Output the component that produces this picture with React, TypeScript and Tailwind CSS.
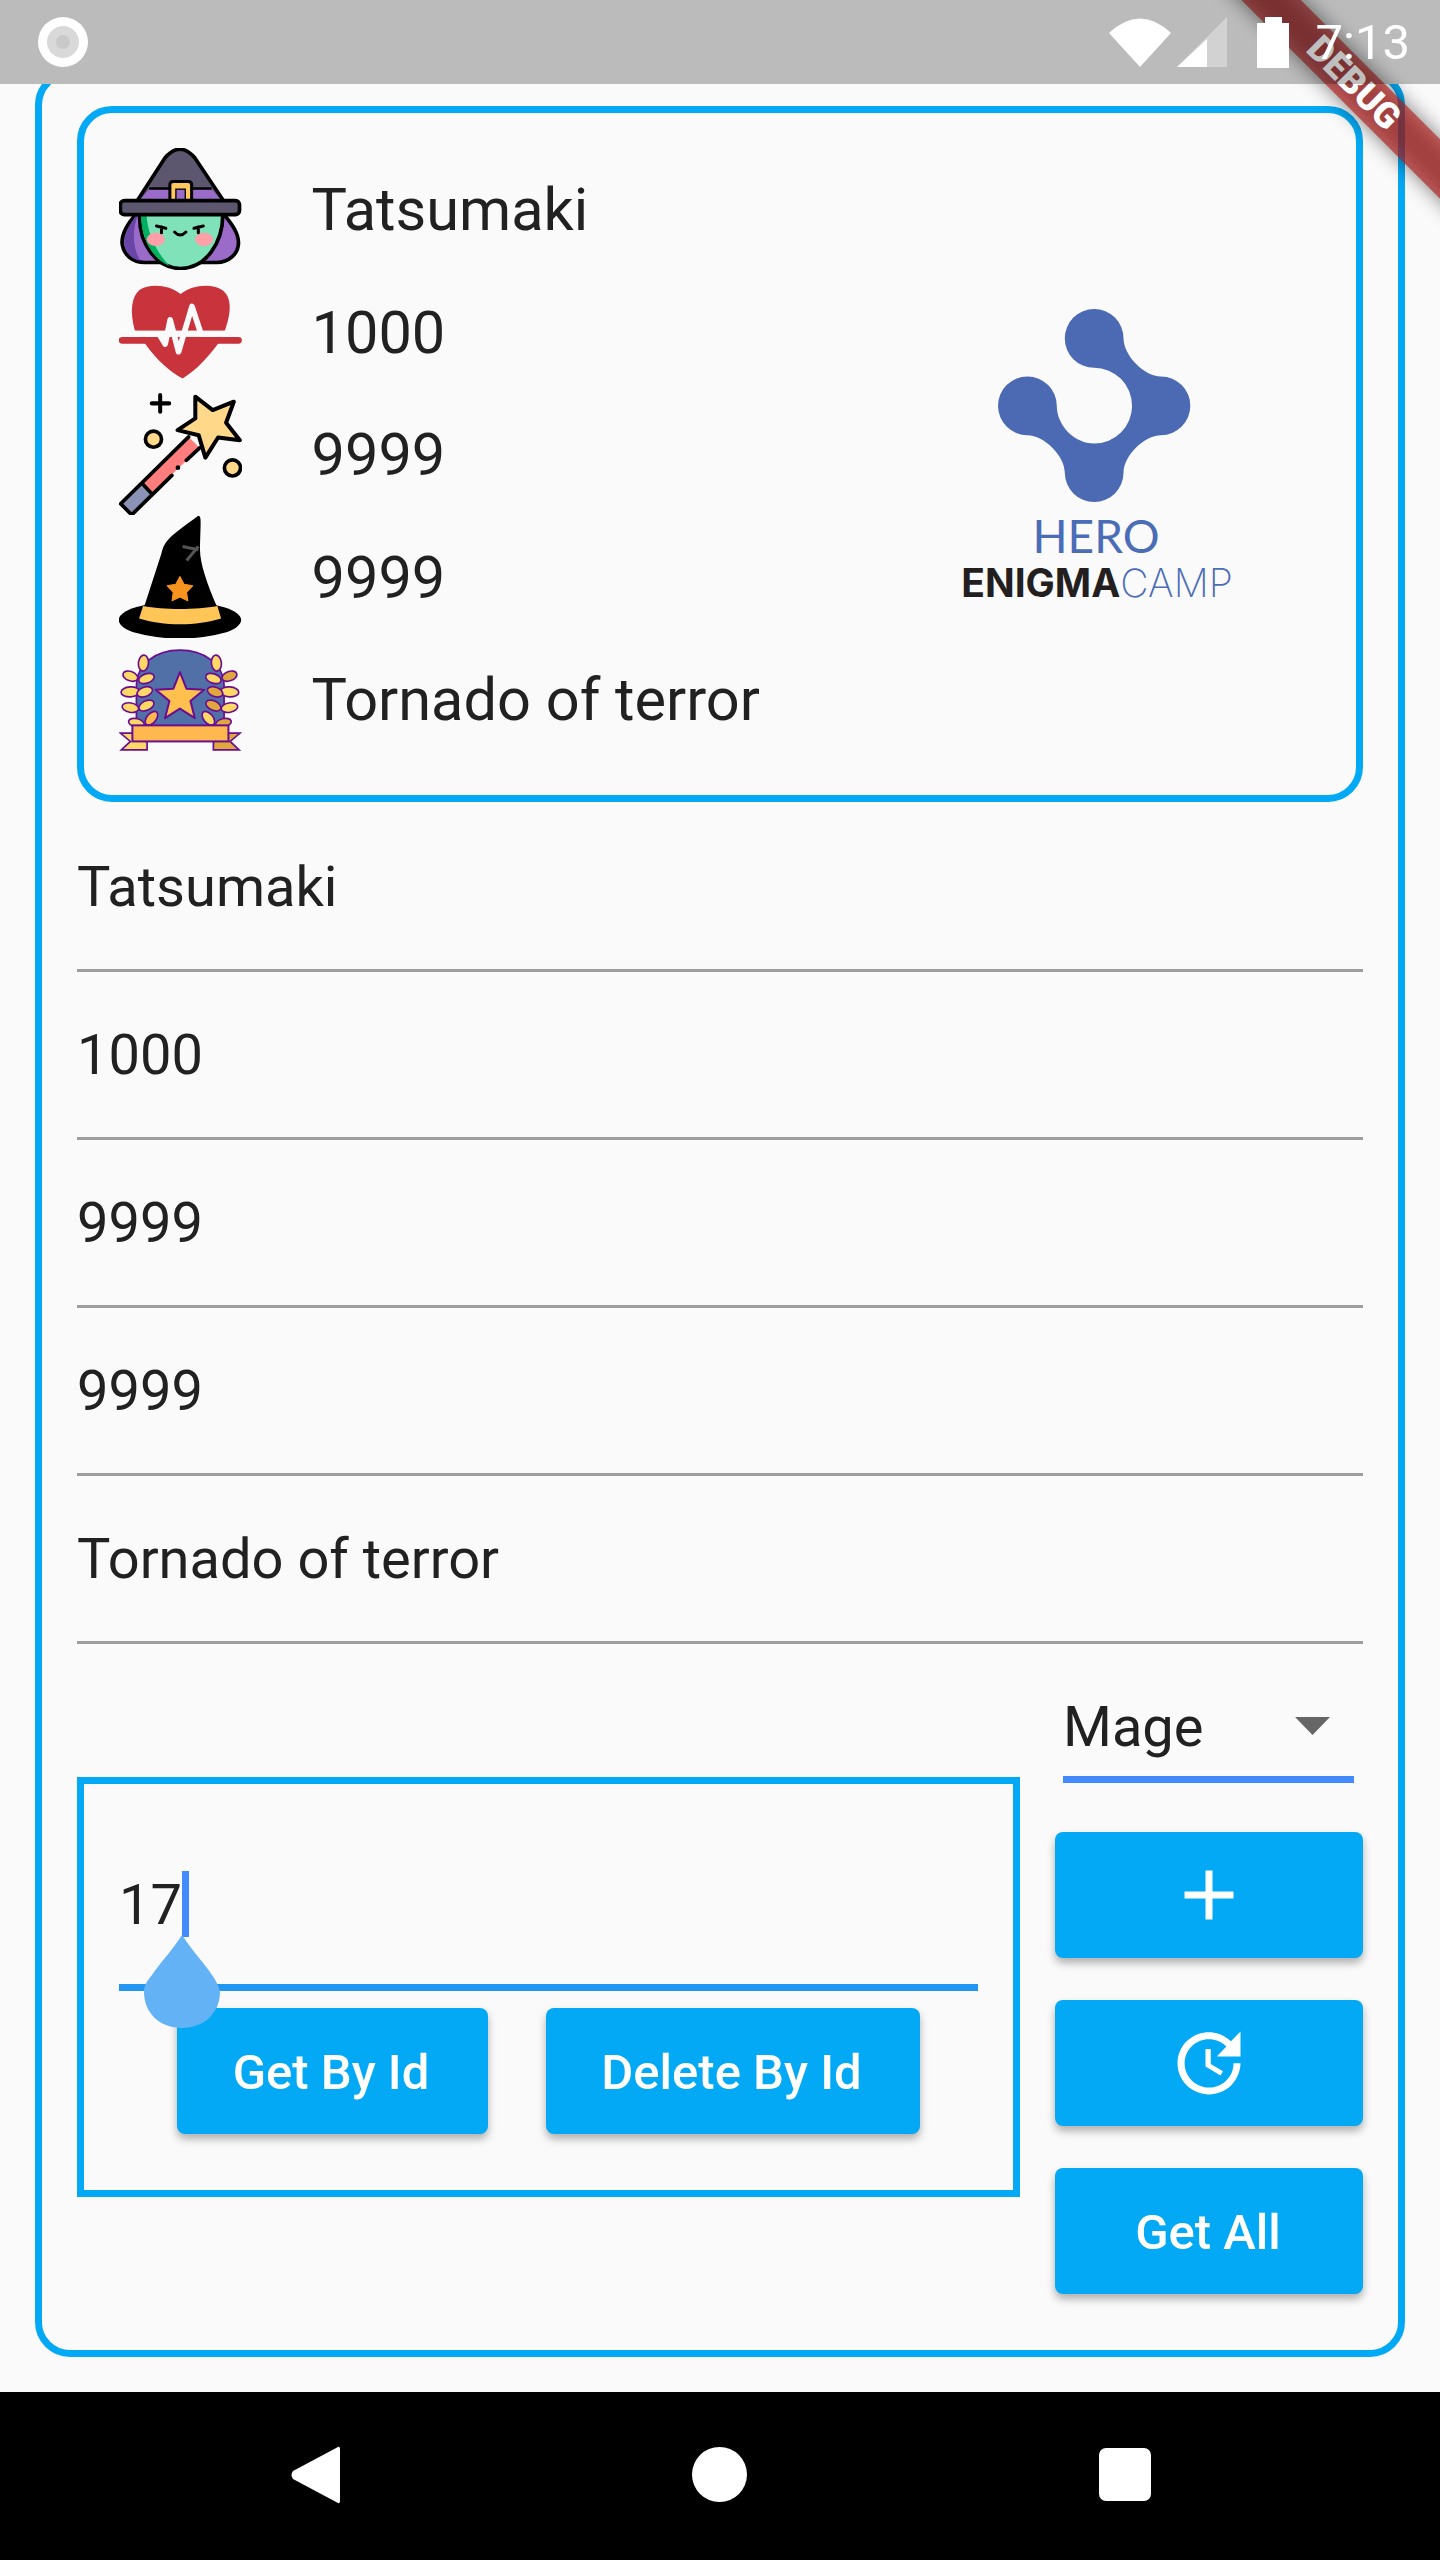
import React from 'react'

const starPoints = (cx: number, cy: number, r: number, inner: number) =>
  Array.from({ length: 10 }, (_, i) => {
    const a = (Math.PI / 5) * i - Math.PI / 2
    const d = i % 2 === 0 ? r : inner
    return `${cx + Math.cos(a) * d},${cy + Math.sin(a) * d}`
  }).join(' ')

const WitchIcon = () => (
  <svg viewBox="88 55 366 366" className="h-full w-full">
    <path d="M140 252C112 282 97 310 97 338C100 375 130 397 165 397L380 397C415 397 445 372 445 338C445 308 425 282 400 252Z" fill="#9b6bc9" stroke="#000" strokeWidth="11" />
    <path d="M140 256C118 285 104 312 104 338C106 365 125 388 152 392C130 360 125 300 145 256Z" fill="#6a45a8" />
    <path d="M150 250C145 340 200 415 272 415C345 415 400 340 398 250Z" fill="#80e2b8" stroke="#000" strokeWidth="11" />
    <path d="M154 254C152 320 187 388 240 408C207 375 174 320 170 254Z" fill="#00b060" />
    <path d="M143 212L225 85Q270 32 315 85L400 212Z" fill="#5c566e" stroke="#000" strokeWidth="11" />
    <path d="M150 210L178 178L365 178L393 210Z" fill="#9b6bc9" />
    <path d="M178 176L365 176" stroke="#000" strokeWidth="8" />
    <path d="M240 212L240 165Q240 155 250 155L295 155Q305 155 305 165L305 212Z" fill="#ffc75f" stroke="#000" strokeWidth="9" />
    <rect x="258" y="178" width="28" height="36" fill="#9b6bc9" stroke="#000" strokeWidth="4" />
    <rect x="92" y="212" width="356" height="42" rx="12" fill="#5c566e" stroke="#000" strokeWidth="11" />
    <ellipse cx="198" cy="328" rx="27" ry="20" fill="#ffa0a8" />
    <ellipse cx="342" cy="328" rx="27" ry="20" fill="#ffa0a8" />
    <path d="M200 288L228 295M215 290L215 308M340 288L312 295M325 290L325 308" stroke="#000" strokeWidth="9" strokeLinecap="round" />
    <path d="M254 306Q271 324 288 306" fill="none" stroke="#000" strokeWidth="9" strokeLinecap="round" />
  </svg>
)

const HeartIcon = () => (
  <svg viewBox="88 421 366 366" className="h-full w-full">
    <path d="M272 493C240 465 180 460 150 480C125 500 120 545 135 600L165 640C200 690 240 725 278 745C320 720 355 680 385 640L405 600C425 545 425 500 395 480C365 460 305 465 272 493Z" fill="#c9333b" />
    <rect x="88" y="602" width="366" height="19" fill="#fafafa" />
    <path d="M97 631L445 631" stroke="#c9333b" strokeWidth="20" strokeLinecap="round" />
    <path d="M165 612L208 612L226 642L241 570L266 665L306 530L333 612L385 612" fill="none" stroke="#fafafa" strokeWidth="17" strokeLinejoin="round" />
  </svg>
)

const WandIcon = () => (
  <svg viewBox="42 39 366 366" className="h-full w-full">
    <path d="M165 45L165 95M140 70L192 70" stroke="#000" strokeWidth="12" strokeLinecap="round" />
    <circle cx="145" cy="177" r="24" fill="#ffd88a" stroke="#000" strokeWidth="11" />
    <circle cx="381" cy="263" r="24" fill="#ffd88a" stroke="#000" strokeWidth="11" />
    <polygon points="112,310 250,170 283,203 140,340" fill="#ff7d7d" />
    <polygon points="47,370 112,310 140,340 80,403" fill="#8a93b5" />
    <path d="M47 370L250 170M80 403L47 370M112 310L140 340M80 403L200 285M243 240L283 203" fill="none" stroke="#000" strokeWidth="11" strokeLinecap="round" />
    <circle cx="218" cy="262" r="7" fill="#000" />
    <polygon points="270,50 322,90 385,65 362,128 403,180 338,172 300,232 280,165 217,150 270,115" fill="#ffd88a" stroke="#000" strokeWidth="12" strokeLinejoin="round" />
  </svg>
)

const HatIcon = () => (
  <svg viewBox="88 46 366 366" className="h-full w-full">
    <ellipse cx="270" cy="360" rx="183" ry="55" fill="#000" />
    <path d="M160 330L215 160C225 120 240 110 325 48C335 50 332 60 330 150C330 190 350 250 385 330Z" fill="#000" />
    <path d="M160 318C220 330 320 330 382 318L393 355C320 378 220 378 148 355Z" fill="#ffc556" />
    <polygon points={starPoints(270, 270, 40, 21)} fill="#f7931e" stroke="#f7931e" strokeWidth="3" strokeLinejoin="round" />
    <path d="M278 140L325 150M290 182L325 140" stroke="#555" strokeWidth="9" />
  </svg>
)

const leaves: [number, number, number, number, number, string, string][] = [
  [161, 489, 24, 15, -85, '#ffd966', '#ffd966'],
  [122, 528, 23, 14, 20, '#ffd966', '#e0a83c'],
  [170, 535, 24, 14, -20, '#ffd966', '#ffd966'],
  [122, 575, 28, 15, -3, '#ffd966', '#ffd966'],
  [165, 575, 24, 14, -20, '#ffd966', '#e0a83c'],
  [122, 622, 25, 14, 10, '#ffd966', '#ffd966'],
  [170, 616, 24, 14, -25, '#ffd966', '#e0a83c'],
  [140, 668, 24, 13, 15, '#ffd966', '#e0a83c'],
  [185, 654, 24, 14, -50, '#ffb84d', '#ffd966'],
]

const BadgeIcon = () => (
  <svg viewBox="88 414 366 366" className="h-full w-full">
    <path d="M140 560C140 490 200 450 270 450C340 450 402 490 402 560L402 680L140 680Z" fill="#5170a8" stroke="#6a0d91" strokeWidth="5" />
    <polygon points={starPoints(270, 592, 76, 33)} fill="#ffc04d" stroke="#6a0d91" strokeWidth="6" strokeLinejoin="round" />
    {leaves.map(([x, y, rx, ry, rot, left, right], i) => (
      <g key={i}>
        <ellipse cx={x} cy={y} rx={rx} ry={ry} transform={`rotate(${rot} ${x} ${y})`} fill={left} stroke="#6a0d91" strokeWidth="5" />
        <ellipse cx={540 - x} cy={y} rx={rx} ry={ry} transform={`rotate(${-rot} ${540 - x} ${y})`} fill={right} stroke="#6a0d91" strokeWidth="5" />
      </g>
    ))}
    <polygon points="92,698 130,698 172,726 172,748 95,748 122,723" fill="#ffd966" stroke="#6a0d91" strokeWidth="5" />
    <polygon points="450,698 412,698 370,726 370,748 447,748 420,723" fill="#e0a83c" stroke="#6a0d91" strokeWidth="5" />
    <rect x="128" y="675" width="287" height="48" fill="#ffb84d" stroke="#6a0d91" strokeWidth="6" />
  </svg>
)

const LogoMark = () => (
  <svg viewBox="172 62 578 578" className="h-[193px] w-[193px]">
    <path
      d="M460 62A88 88 0 0 1 548 150C548 200 610 264 660 264A88 88 0 0 1 660 440C610 440 548 502 548 552A88 88 0 0 1 372 552C372 502 310 440 260 440A88 88 0 0 1 260 264A88 88 0 0 1 348 352C348 410 400 465 460 465A113.500 113.500 0 0 0 460 238A88 88 0 0 1 460 62Z"
      fill="#4b6ab3"
    />
  </svg>
)

const rows = [
  { icon: <WitchIcon />, text: 'Tatsumaki' },
  { icon: <HeartIcon />, text: '1000' },
  { icon: <WandIcon />, text: '9999' },
  { icon: <HatIcon />, text: '9999' },
  { icon: <BadgeIcon />, text: 'Tornado of terror' },
]

const fields = ['Tatsumaki', '1000', '9999', '9999', 'Tornado of terror']

const Button: React.FC<{ className: string; children: React.ReactNode }> = ({ className, children }) => (
  <button className={`flex h-[126px] items-center justify-center rounded-[8px] bg-[#03a9f4] text-[49px] font-medium text-white shadow-[0_5px_9px_rgba(0,0,0,0.3)] ${className}`}>
    {children}
  </button>
)

const StatusBar = () => (
  <div className="absolute top-0 left-0 z-20 flex h-[84px] w-full items-center justify-between bg-black/25 pr-[30px] pl-[38px]">
    <svg viewBox="0 0 50 50" className="h-[50px] w-[50px]">
      <circle cx="25" cy="25" r="25" fill="#fff" />
      <circle cx="25" cy="25" r="16" fill="#d9d9d9" />
      <circle cx="25" cy="25" r="7" fill="#c9c9c9" />
    </svg>
    <div className="flex items-center">
      <svg viewBox="0 0 62 50" className="h-[50px] w-[62px]">
        <path d="M0 16Q31 -13 62 16L31 50Z" fill="#fff" />
      </svg>
      <svg viewBox="0 0 50 50" className="ml-[6px] h-[50px] w-[50px]">
        <polygon points="50,0 50,50 0,50" fill="#fff" fillOpacity="0.35" />
        <polygon points="30,22 30,50 0,50" fill="#fff" />
      </svg>
      <svg viewBox="0 0 32 51" className="ml-[30px] h-[51px] w-[32px]">
        <path d="M8 0H25V6H32V51H0V6H8Z" fill="#fff" />
      </svg>
      <span className="ml-[27px] text-[49px] leading-none text-white">7:13</span>
    </div>
  </div>
)

const DebugBanner = () => (
  <div className="absolute top-[83px] left-[1354px] z-10 h-[42px] w-[560px] -translate-x-1/2 -translate-y-1/2 rotate-45">
    <div className="absolute inset-0 bg-black/50 blur-[10px]" />
    <div className="absolute inset-0 flex items-center justify-center bg-[#b71c1c]/[0.63] text-[36px] leading-none font-black text-white">
      DEBUG
    </div>
  </div>
)

const NavBar = () => (
  <div className="flex h-[168px] items-center justify-center gap-[352px] bg-black pb-[3px]">
    <svg viewBox="0 0 50 58" className="h-[58px] w-[50px]">
      <path d="M48 1Q50 0 50 4V54Q50 58 48 57L3 33Q0 29 3 25Z" fill="#fff" />
    </svg>
    <div className="h-[55px] w-[55px] rounded-full bg-white" />
    <div className="h-[53px] w-[52px] rounded-[7px] bg-white" />
  </div>
)

export default function App() {
  return (
    <div className="relative flex h-[2560px] w-[1440px] flex-col overflow-hidden bg-[#fafafa] font-['Roboto',sans-serif] text-[56px] text-[#212121]">
      <DebugBanner />
      <StatusBar />
      <div className="h-[84px] shrink-0" />
      <main className="min-h-0 flex-1 overflow-hidden">
        <div className="mx-[35px] -mt-[14px] h-[2287px] rounded-[35px] border-[7px] border-[#03a9f4] px-[35px] pt-[29px]">
          <section className="flex h-[696px] items-center justify-between rounded-[35px] border-[7px] border-[#03a9f4] pr-[122px] pl-[35px]">
            <div className="flex flex-col">
              {rows.map((row, index) => (
                <div className="flex h-[122.5px] items-center gap-[70px]" key={index}>
                  <div className="h-[122.5px] w-[122.5px]">{row.icon}</div>
                  <span className="pt-[4px] text-[59.5px]">{row.text}</span>
                </div>
              ))}
            </div>
            <div className="flex w-[280px] flex-col items-center pt-[4px]">
              <LogoMark />
              <div className="mt-[7px] ml-[4px] font-['Lato',sans-serif] text-[46px] leading-[53px] text-[#4b6cb7]">HERO</div>
              <div className="ml-[6px] flex font-['Inter',sans-serif] text-[39px] leading-[42px]">
                <span className="font-bold text-[#231f20]">ENIGMA</span>
                <span className="font-extralight text-[#4b6cb7]">CAMP</span>
              </div>
            </div>
          </section>

          <div className="mt-[2px]">
            {fields.map((field, index) => (
              <div className="flex h-[168px] items-center border-b-[3.500px] border-[#9e9e9e] pt-[1px]" key={index}>
                {field}
              </div>
            ))}
          </div>

          <div className="flex gap-[35px]">
            <div className="pt-[133px]">
              <div className="relative h-[420px] w-[943px] border-[7px] border-[#03a9f4] px-[35px] pt-[87px]">
                <div className="flex h-[66px] items-center">
                  <span className="pt-[2px] leading-none">17</span>
                  <span className="h-[66px] w-[7px] bg-[#448aff]" />
                </div>
                <div className="mt-[47px] h-[7px] bg-[#2196f3]" />
                <div className="mt-[17px] flex justify-center gap-[58px]">
                  <Button className="w-[311px] pt-[4px] pr-[3px]">Get By Id</Button>
                  <Button className="w-[374px] pt-[4px] pr-[3px]">Delete By Id</Button>
                </div>
                <svg viewBox="0 0 76 93" className="absolute top-[151px] left-[60px] z-10 h-[93px] w-[76px]">
                  <path d="M38 0C50 18 60 28 68 40C74 48 76 56 76 57C76 78 60 93 38 93C16 93 0 78 0 57C0 50 3 46 8 40C16 28 26 18 38 0Z" fill="#64b2f6" />
                </svg>
              </div>
            </div>

            <div className="w-[308px] pt-[32px]">
              <div className="mx-[8px] w-[291px]">
                <div className="flex h-[100px] items-center justify-between pr-[24px]">
                  <span className="pt-[2px]">Mage</span>
                  <svg viewBox="0 0 35 18" className="h-[18px] w-[35px]">
                    <polygon points="0,0 35,0 17.500,18" fill="#666" />
                  </svg>
                </div>
                <div className="h-[7px] bg-[#448aff]" />
              </div>
              <div className="mt-[49px] flex flex-col gap-[42px]">
                <Button className="w-full">
                  <svg viewBox="0 0 24 24" className="h-[84px] w-[84px]" fill="#fff">
                    <path d="M19 13h-6v6h-2v-6H5v-2h6V5h2v6h6v2z" />
                  </svg>
                </Button>
                <Button className="w-full">
                  <svg viewBox="0 0 24 24" className="h-[84px] w-[84px]" fill="#fff">
                    <path d="M21 10.120h-6.780l2.740-2.820c-2.730-2.700-7.150-2.800-9.880-.1-2.730 2.710-2.730 7.080 0 9.790s7.150 2.710 9.880 0C18.320 15.650 19 14.080 19 12.100h2c0 1.980-.88 4.550-2.640 6.290-3.510 3.480-9.210 3.480-12.720 0-3.500-3.470-3.530-9.110-.02-12.580s9.140-3.470 12.650 0L21 3v7.120zM12.500 8v4.250l3.500 2.080-.72 1.210L11 13V8h1.500z" />
                  </svg>
                </Button>
                <Button className="w-full pt-[4px] pr-[2px]">Get All</Button>
              </div>
            </div>
          </div>
        </div>
      </main>
      <NavBar />
    </div>
  )
}
